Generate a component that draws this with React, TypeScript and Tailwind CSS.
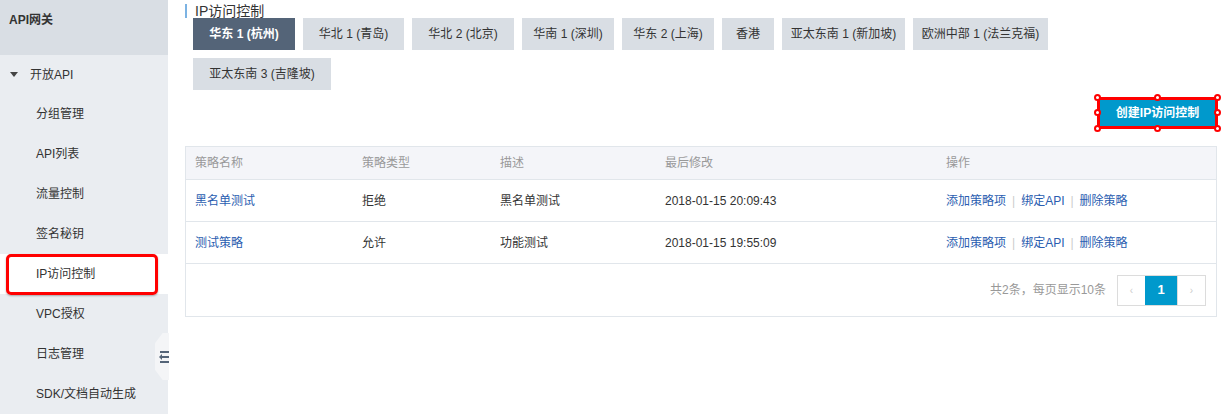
import React from 'react';

const menuItems = ['分组管理', 'API列表', '流量控制', '签名秘钥', 'IP访问控制', 'VPC授权', '日志管理', 'SDK/文档自动生成'];

const regions = [
    { label: '华东 1 (杭州)', width: 'w-[102px]', active: true },
    { label: '华北 1 (青岛)', width: 'w-[101px]' },
    { label: '华北 2 (北京)', width: 'w-[102px]' },
    { label: '华南 1 (深圳)', width: 'w-[92px]' },
    { label: '华东 2 (上海)', width: 'w-[92px]' },
    { label: '香港', width: 'w-[52px]' },
    { label: '亚太东南 1 (新加坡)', width: 'w-[123px]' },
    { label: '欧洲中部 1 (法兰克福)', width: 'w-[135px]' },
    { label: '亚太东南 3 (吉隆坡)', width: 'w-[138px]' },
];

const rows = [
    { name: '黑名单测试', type: '拒绝', desc: '黑名单测试', time: '2018-01-15 20:09:43' },
    { name: '测试策略', type: '允许', desc: '功能测试', time: '2018-01-15 19:55:09' },
];

const cols = 'grid grid-cols-[166px_138px_165px_281px_1fr]';

const Handle: React.FC<{ className: string }> = ({ className }) => (
    <span className={`absolute w-[7px] h-[7px] rounded-full bg-white border-2 border-[#ff0000] ${className}`} />
);

const Sidebar: React.FC = () => (
    <div className="relative w-[168px] h-[414px] shrink-0 bg-[#eaedf1] text-[12px] text-[#333]">
        <div className="h-[55px] bg-[#d9dee4] pl-[9px] pt-[12px] font-bold leading-[16px]">API网关</div>
        <div className="h-[39px] flex items-center pl-[10px]">
            <svg width="8" height="5" viewBox="0 0 8 5" className="mr-[12px]">
                <path d="M0 0h8L4 5z" fill="#444" />
            </svg>
            开放API
        </div>
        {menuItems.map((item) => {
            const active = item === 'IP访问控制';
            return (
                <div
                    key={item}
                    className={`relative h-[40px] flex items-center pl-[36px] ${active ? 'bg-white' : ''}`}
                >
                    {item}
                    {active && (
                        <span className="absolute left-[6px] right-[10px] top-0 bottom-[-1px] border-[3px] border-[#ff0000] rounded-[5px] shadow-[0_1px_2px_rgba(0,0,0,0.3)]" />
                    )}
                </div>
            );
        })}
        <div className="absolute left-[155px] top-[333px] w-[14px] h-[47px] bg-[#f4f5f7] [clip-path:polygon(0_22%,55%_0,100%_0,100%_100%,55%_100%,0_78%)] flex flex-col justify-center items-end gap-[3px]">
            <span className="block w-[9px] h-[2px] bg-[#546478]" />
            <span className="relative block w-[7px] h-[2px] bg-[#546478]">
                <span className="absolute left-[-3px] top-[-2px] border-y-[3px] border-y-transparent border-r-[3px] border-r-[#546478]" />
            </span>
            <span className="block w-[9px] h-[2px] bg-[#546478]" />
        </div>
    </div>
);

const App: React.FC = () => {
    return (
        <div className="flex w-[1225px] h-[414px] overflow-hidden bg-white font-['Liberation_Sans','Noto_Sans_CJK_SC',sans-serif] text-[12px] text-[#333]">
            <Sidebar />
            <div className="flex-1 pl-[17px] pr-[7px]">
                <div className="h-[18px] flex items-start">
                    <span className="mt-[4px] w-[2px] h-[14px] bg-[#7cb3e3]" />
                    <span className="ml-[8px] text-[14px] leading-[22px] text-[#333]">IP访问控制</span>
                </div>
                <div className="pl-[8px] w-[880px] flex flex-wrap gap-[8px]">
                    {regions.map((r) => (
                        <div
                            key={r.label}
                            className={`${r.width} h-[32px] flex items-center justify-center whitespace-nowrap ${
                                r.active ? 'bg-[#546478] text-white font-bold' : 'bg-[#d9dee4] text-[#333]'
                            }`}
                        >
                            {r.label}
                        </div>
                    ))}
                </div>
                <div className="flex justify-end mt-[7px]">
                    <div className="relative w-[121px] h-[32px] border-[3px] border-[#ff0000] rounded-[3px] bg-[#0099cc] text-white font-bold flex items-center justify-center">
                        创建IP访问控制
                        <Handle className="left-[-6px] top-[-6px]" />
                        <Handle className="left-[54px] top-[-6px]" />
                        <Handle className="right-[-6px] top-[-6px]" />
                        <Handle className="left-[-6px] top-[9px]" />
                        <Handle className="right-[-6px] top-[9px]" />
                        <Handle className="left-[-6px] bottom-[-6px]" />
                        <Handle className="left-[54px] bottom-[-6px]" />
                        <Handle className="right-[-6px] bottom-[-6px]" />
                    </div>
                </div>
                <div className="mt-[17px] mr-[1px] border border-[#e1e6eb]">
                    <div className={`${cols} h-[33px] items-center bg-[#f4f5f9] text-[#999] border-b border-[#e1e6eb]`}>
                        <div className="pl-[9px]">策略名称</div>
                        <div className="pl-[10px]">策略类型</div>
                        <div className="pl-[10px]">描述</div>
                        <div className="pl-[10px]">最后修改</div>
                        <div className="pl-[10px]">操作</div>
                    </div>
                    {rows.map((row) => (
                        <div key={row.name} className={`${cols} h-[42px] items-center border-b border-[#e1e6eb]`}>
                            <div className="pl-[9px] text-[#2a5db0]">{row.name}</div>
                            <div className="pl-[10px]">{row.type}</div>
                            <div className="pl-[10px]">{row.desc}</div>
                            <div className="pl-[10px]">{row.time}</div>
                            <div className="pl-[10px] flex items-center text-[#2a5db0]">
                                <span>添加策略项</span>
                                <span className="mx-[6px] text-[#ccc]">|</span>
                                <span>绑定API</span>
                                <span className="mx-[6px] text-[#ccc]">|</span>
                                <span>删除策略</span>
                            </div>
                        </div>
                    ))}
                    <div className="h-[52px] flex items-center justify-end pr-[10px]">
                        <span className="text-[#999] mr-[11px]">共2条，每页显示10条</span>
                        <div className="flex h-[31px] border border-[#dcdcdc]">
                            <div className="w-[27px] flex items-center justify-center text-[#ccc] text-[10px]">‹</div>
                            <div className="w-[32px] flex items-center justify-center bg-[#0099cc] text-white font-bold text-[13px]">1</div>
                            <div className="w-[28px] flex items-center justify-center text-[#ccc] text-[10px] border-l border-[#dcdcdc]">›</div>
                        </div>
                    </div>
                </div>
            </div>
        </div>
    );
};

export default App;
